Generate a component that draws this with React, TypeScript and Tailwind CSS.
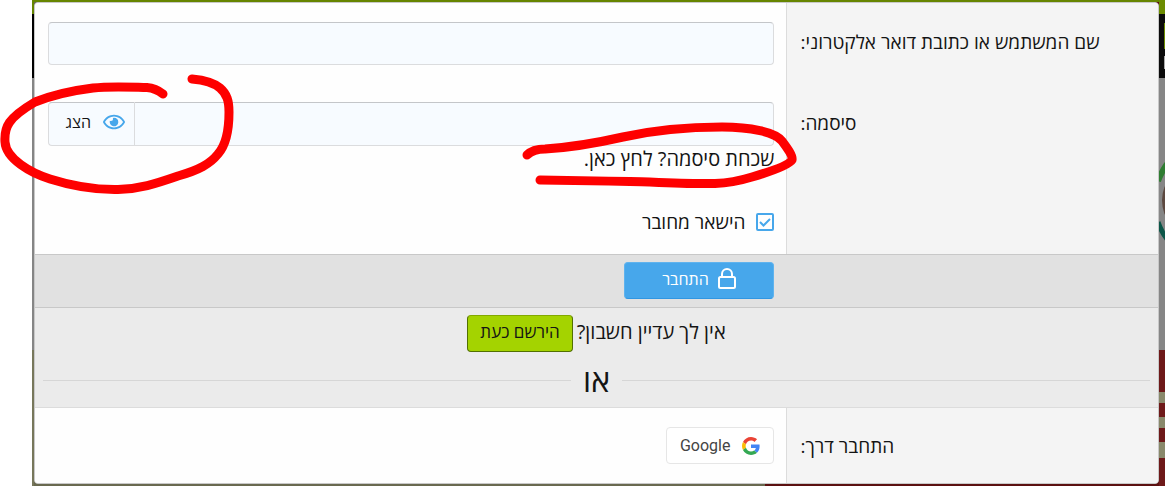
import React, { useState } from 'react';
import { FaRegEye } from 'react-icons/fa';

interface FormRowProps {
  label: string;
  htmlFor?: string;
  labelClass?: string;
  className?: string;
  children: React.ReactNode;
}

const FormRow: React.FC<FormRowProps> = ({ label, htmlFor, labelClass = '', className = '', children }) => (
  <div className="flex">
    <div className={`w-[33%] shrink-0 bg-[#f4f4f4] pl-[13px] text-left ${labelClass}`}>
      <label htmlFor={htmlFor} className="block leading-6">{label}</label>
    </div>
    <div className={`min-w-0 flex-1 border-r border-[#dcdcdc] bg-[#fefefe] pr-3 pl-[13px] ${className}`}>{children}</div>
  </div>
);

const LockIcon = () => (
  <svg width="20" height="22" viewBox="0 0 20 22" fill="none" stroke="currentColor" strokeWidth="2" aria-hidden="true">
    <rect x="2" y="9" width="16" height="11" rx="1.5" />
    <path d="M5 9V6a5 5 0 0 1 10 0v3" />
  </svg>
);

const GoogleIcon = () => (
  <svg width="18" height="18" viewBox="0 0 48 48" aria-hidden="true">
    <path fill="#EA4335" d="M24 9.5c3.54 0 6.71 1.22 9.21 3.6l6.85-6.85C35.9 2.38 30.47 0 24 0 14.62 0 6.51 5.38 2.56 13.22l7.98 6.19C12.43 13.72 17.74 9.5 24 9.5z" />
    <path fill="#4285F4" d="M46.98 24.55c0-1.57-.15-3.09-.38-4.55H24v9.02h12.94c-.58 2.96-2.26 5.48-4.78 7.18l7.73 6c4.51-4.18 7.09-10.36 7.09-17.65z" />
    <path fill="#FBBC05" d="M10.53 28.59c-.48-1.45-.76-2.99-.76-4.59s.27-3.14.76-4.59l-7.98-6.19C.92 16.46 0 20.12 0 24c0 3.88.92 7.54 2.56 10.78l7.97-6.19z" />
    <path fill="#34A853" d="M24 48c6.48 0 11.93-2.13 15.89-5.81l-7.73-6c-2.15 1.45-4.92 2.3-8.16 2.3-6.26 0-11.57-4.22-13.47-9.91l-7.98 6.19C6.51 42.62 14.62 48 24 48z" />
  </svg>
);

// red pen marks drawn over the form
const Marks = () => (
  <>
    <svg className="pointer-events-none absolute top-0 left-0" width="240" height="200" fill="none" stroke="#fe0000" strokeWidth="9" strokeLinecap="round" strokeLinejoin="round" aria-hidden="true">
      <path d="M192 79C203 80 213 82 220 88C227 94 229 101 229 112C229 128 226 145 218 154C210 164 199 170 178 176C155 184 139 189 118 189.500C92 190 72 186 50 179C31 173 6 159 5 142C4 127 8 118 35 102C50 96 69 91 93 88C110 86 128 87 147 87.500C154 88 158 90 163 94" />
    </svg>
    <svg className="pointer-events-none absolute top-0 right-[345px]" width="320" height="200" fill="none" stroke="#fe0000" strokeWidth="9" strokeLinecap="round" strokeLinejoin="round" aria-hidden="true">
      <path d="M27 155C31 151 36 149 45 149C78 147 101 142 123 137C150 131 183 127 222 127C250 127 275 132 282 141C288 149 293 156 292 160C289 165 269 172 252 177C239 181 229 183 215 183.500C190 184 155 182 130 181.500C101 181 75 180.500 40 180" />
    </svg>
  </>
);

const inputClass = 'block w-full rounded border border-[#dbdcde] border-t-[#c4c6c9] bg-[#f7fbff] px-3 outline-none';

const App: React.FC = () => {
  const [showPassword, setShowPassword] = useState(false);
  const [stay, setStay] = useState(true);

  return (
    <div dir="ltr" className="relative flex min-h-screen overflow-hidden bg-white pl-8 font-['Open_Sans',sans-serif] text-[19px] text-[#141414]">
      <div className="flex w-[2px] shrink-0 flex-col">
        <div className="h-[14px] bg-[#668500]" />
        <div className="h-16 bg-black" />
        <div className="h-[272px] bg-[#858585]" />
        <div className="flex-1 bg-[#77775b]" />
      </div>

      <div className="flex min-w-0 flex-1 flex-col bg-[linear-gradient(90deg,#69694f_65%,#5b1010_65%)]">
        <div className="h-[2px] bg-[#668500]" />
        <form dir="rtl" className="overflow-hidden rounded border border-[#c8c8c8] bg-[#fefefe]" onSubmit={(e) => e.preventDefault()}>
          <FormRow label="שם המשתמש או כתובת דואר אלקטרוני:" htmlFor="login" labelClass="pt-[27px]" className="py-[19px]">
            <input id="login" type="text" className={`h-[43px] ${inputClass}`} />
          </FormRow>

          <FormRow label="סיסמה:" htmlFor="password" labelClass="pt-[27px]" className="pt-[18px] pb-5">
            <div className="flex">
              <input id="password" type={showPassword ? 'text' : 'password'} className={`h-11 min-w-0 flex-1 rounded-l-none ${inputClass}`} />
              <button
                type="button"
                onClick={() => setShowPassword(!showPassword)}
                className="flex h-11 w-[86px] shrink-0 items-center gap-3 rounded-l border border-r-0 border-[#dbdcde] border-t-[#c4c6c9] bg-[#f7fbff] pr-[9px] pb-1 text-base"
              >
                <FaRegEye size={22} className="text-[#47a7eb]" />
                הצג
              </button>
            </div>
            <a href="#forgot" className="block text-xl leading-[26px]">שכחת סיסמה? לחץ כאן.</a>
            <label className="mt-[38px] flex items-center gap-[11px] leading-6">
              <span className="relative flex">
                <input type="checkbox" checked={stay} onChange={(e) => setStay(e.target.checked)} className="size-[18px] appearance-none rounded-xs border-2 border-[#47a7eb]" />
                {stay && (
                  <svg className="pointer-events-none absolute inset-0" width="18" height="18" viewBox="0 0 18 18" fill="none" stroke="#47a7eb" strokeWidth="2" aria-hidden="true">
                    <path d="M4 9l3.500 3.500 6.500-6.500" />
                  </svg>
                )}
              </span>
              הישאר מחובר
            </label>
          </FormRow>

          <div className="flex border-y border-[#c8c8c8] bg-[#e1e1e1] pt-[7px] pb-2">
            <div className="w-[33%] shrink-0" />
            <div className="flex-1 px-[13px]">
              <button type="submit" className="flex h-[37px] w-[150px] items-center justify-center gap-2 rounded border border-[#5fb3ee] border-b-[#3096e2] bg-[#47a7eb] pb-1 text-base text-white">
                <LockIcon />
                התחבר
              </button>
            </div>
          </div>

          <div className="border-b border-[#dcdcdc] bg-[#ebebeb] py-[7px]">
            <div className="flex items-start justify-center gap-1">
              <span className="text-xl leading-[34px]">אין לך עדיין חשבון?</span>
              <button type="button" className="h-[37px] rounded border border-[#527000] border-t-[#83a900] bg-[#a4d300] px-3 pb-1 text-[17px] text-[#141414]">
                הירשם כעת
              </button>
            </div>
            <div className="mt-2 flex items-center gap-3 px-2 before:h-px before:flex-1 before:bg-[#d6d6d6] after:h-px after:flex-1 after:bg-[#d6d6d6]">
              <span className="text-[32px] leading-10">או</span>
            </div>
          </div>

          <FormRow label="התחבר דרך:" labelClass="pt-[26px]" className="py-[19px]">
            <button type="button" className="flex h-[37px] items-center gap-3 rounded border border-[#e6e6e6] bg-white px-[13px] font-['Roboto',sans-serif] text-base text-[#444]">
              <GoogleIcon />
              Google
            </button>
          </FormRow>
        </form>
      </div>

      {/* dimmed page that shows past the overlay's edge */}
      <div className="flex w-[6px] shrink-0 flex-col">
        <div className="h-[14px] bg-[#6c8c00]" />
        <div className="flex h-16 flex-col items-end bg-[#0b0b0b] pt-[9px]">
          <div className="h-[26px] w-px bg-[#6c8c00]" />
          <div className="mt-[7px] h-[13px] w-px bg-[#aaa]" />
        </div>
        <div className="h-[272px] bg-[#868686]">
          <svg width="6" height="272" viewBox="0 0 6 272" fill="none" aria-hidden="true">
            <path d="M8 86Q2 95-1 103" stroke="#2f7d32" strokeWidth="6" />
            <path d="M-1 144Q2 153 8 161" stroke="#0c5648" strokeWidth="5" />
            <path d="M7 109Q2 122 7 136" stroke="#5d4940" strokeWidth="3" />
          </svg>
        </div>
        <div className="flex flex-1 flex-col gap-[14px] bg-[#6e1919] pt-[42px]">
          <div className="h-[11px] bg-[#89896b]" />
          <div className="h-[11px] bg-[#89896b]" />
          <div className="h-4 bg-[#89896b]" />
        </div>
      </div>

      <Marks />
    </div>
  );
};

export default App;
